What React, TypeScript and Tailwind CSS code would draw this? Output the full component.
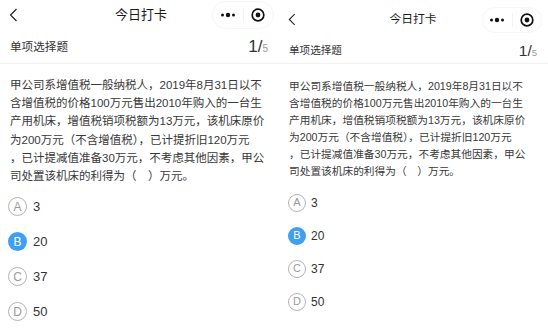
import type { ReactNode } from 'react';

type Size = {
  panel: string;
  header: string;
  back: string;
  backIcon: string;
  title: string;
  capsule: string;
  typeRow: string;
  typeText: string;
  countBig: string;
  countSmall: string;
  body: string;
  list: string;
  row: string;
  circle: string;
  optText: string;
};

const big: Size = {
  panel: 'w-[278px]',
  header: 'h-[30px]',
  back: 'pl-[9px]',
  backIcon: 'w-[9px] h-[14px]',
  title: 'text-[13px] ml-[4px]',
  capsule: 'w-[62px] h-[28px] mr-[4px]',
  typeRow: 'h-[34px] px-[10px]',
  typeText: 'text-[11.6px]',
  countBig: 'text-[17px]',
  countSmall: 'text-[10px]',
  body: 'pt-[12px] pl-[10px] text-[11.5px] leading-[18.2px]',
  list: 'pt-[4px] pl-[8px]',
  row: 'h-[35px] gap-[6px]',
  circle: 'w-[19px] h-[19px] text-[12px]',
  optText: 'text-[13px]',
};

const small: Size = {
  panel: 'w-[270px]',
  header: 'h-[39px]',
  back: 'pl-[10px]',
  backIcon: 'w-[8px] h-[13px]',
  title: 'text-[11.8px]',
  capsule: 'w-[60px] h-[26px] mr-[6px]',
  typeRow: 'h-[25px] px-[11px]',
  typeText: 'text-[10.6px]',
  countBig: 'text-[15.5px]',
  countSmall: 'text-[9.5px]',
  body: 'pt-[14px] pl-[11px] text-[10.7px] leading-[17px]',
  list: 'pt-[6px] pl-[10px]',
  row: 'h-[33px] gap-[5px]',
  circle: 'w-[18px] h-[18px] text-[11px]',
  optText: 'text-[12px]',
};

const lines = [
  '甲公司系增值税一般纳税人，2019年8月31日以不',
  '含增值税的价格100万元售出2010年购入的一台生',
  '产用机床，增值税销项税额为13万元，该机床原价',
  '为200万元（不含增值税），已计提折旧120万元',
  '，已计提减值准备30万元，不考虑其他因素，甲公',
  '司处置该机床的利得为（　）万元。',
];

const options = [
  { key: 'A', text: '3' },
  { key: 'B', text: '20', picked: true },
  { key: 'C', text: '37' },
  { key: 'D', text: '50' },
];

function Capsule({ cls }: { cls: string }) {
  return (
    <div className={`${cls} flex items-center rounded-full border border-[#f6f6f6] bg-white`}>
      <div className="flex-1 flex justify-center">
        <svg width="16" height="6" viewBox="0 0 16 6">
          <circle cx="2.5" cy="3" r="1.5" fill="#111" />
          <circle cx="8" cy="3" r="2.2" fill="#111" />
          <circle cx="13.5" cy="3" r="1.5" fill="#111" />
        </svg>
      </div>
      <div className="w-px h-[14px] bg-[#f3f3f3]" />
      <div className="flex-1 flex justify-center">
        <svg width="14" height="14" viewBox="0 0 14 14">
          <circle cx="7" cy="7" r="5.8" fill="none" stroke="#111" strokeWidth="1.7" />
          <circle cx="7" cy="7" r="2.4" fill="#111" />
        </svg>
      </div>
    </div>
  );
}

function Panel({ s }: { s: Size }): ReactNode {
  return (
    <div className={`${s.panel} shrink-0 h-full overflow-hidden bg-white`}>
      <div className={`${s.header} grid grid-cols-[1fr_auto_1fr] items-center`}>
        <div className={s.back}>
          <svg className={s.backIcon} viewBox="0 0 9 14" fill="none">
            <polyline points="7.5,1 1.5,7 7.5,13" stroke="#222" strokeWidth="1.2" />
          </svg>
        </div>
        <div className={`${s.title} text-[#1a1a1a]`}>今日打卡</div>
        <div className="flex justify-end">
          <Capsule cls={s.capsule} />
        </div>
      </div>

      <div className={`${s.typeRow} flex items-center justify-between border-b border-[#f1f1f1]`}>
        <span className={`${s.typeText} text-[#333]`}>单项选择题</span>
        <span className="flex items-baseline text-[#333]">
          <span className={s.countBig}>1/</span>
          <span className={`${s.countSmall} text-[#999]`}>5</span>
        </span>
      </div>

      <div className={`${s.body} text-[#383838] whitespace-nowrap`}>
        {lines.map((l) => (
          <div key={l}>{l}</div>
        ))}
      </div>

      <div className={s.list}>
        {options.map((o) => (
          <div key={o.key} className={`${s.row} flex items-center`}>
            <div
              className={`${s.circle} rounded-full flex items-center justify-center ${
                o.picked ? 'bg-[#3f9ff0] text-white' : 'border border-[#b3b3b3] text-[#9a9a9a]'
              }`}
            >
              {o.key}
            </div>
            <span className={`${s.optText} text-[#333]`}>{o.text}</span>
          </div>
        ))}
      </div>
    </div>
  );
}

export default function App() {
  return (
    <div className="w-[548px] h-[331px] flex bg-white font-['Liberation_Sans','Noto_Sans_CJK_SC',sans-serif]">
      <Panel s={big} />
      <Panel s={small} />
    </div>
  );
}
